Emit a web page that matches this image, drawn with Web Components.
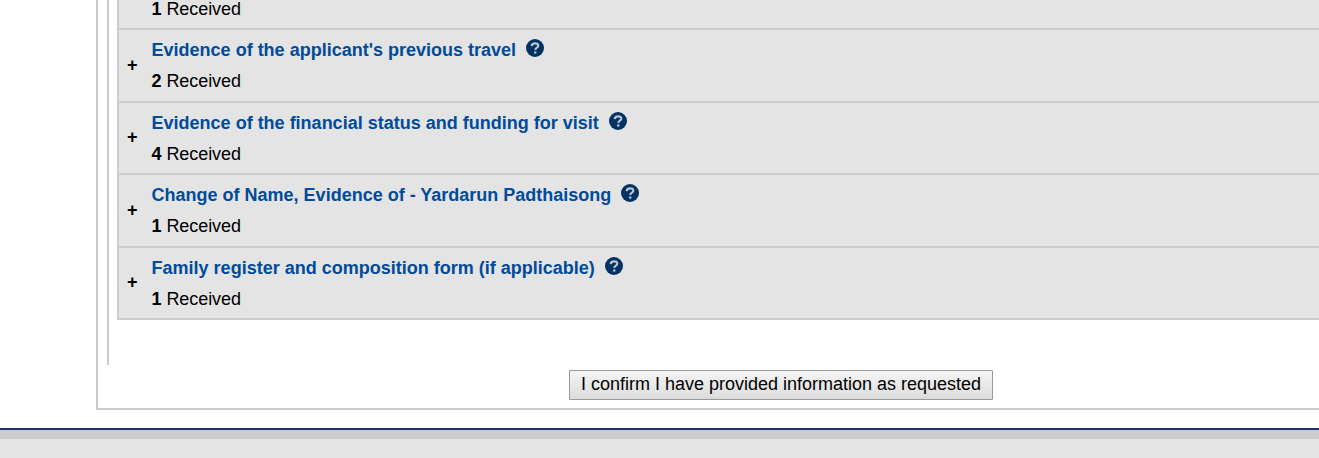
<!DOCTYPE html>
<html lang="en">
<head>
<meta charset="utf-8">
<title>Documents</title>
<style>
  body {
    margin: 0;
    height: 458px;
    overflow: hidden;
    background: #fff;
    color: #000;
    font: 18px/20px "Liberation Sans", Arial, sans-serif;
  }
</style>
</head>
<body>
<form-panel>
  <document-list>
    <document-row cut count="1"></document-row>
    <document-row count="2">Evidence of the applicant's previous travel</document-row>
    <document-row count="4">Evidence of the financial status and funding for visit</document-row>
    <document-row count="1">Change of Name, Evidence of - Yardarun Padthaisong</document-row>
    <document-row count="1">Family register and composition form (if applicable)</document-row>
  </document-list>
  <confirm-button slot="actions">I confirm I have provided information as requested</confirm-button>
</form-panel>
<page-footer></page-footer>

<script>
'use strict'

class FormPanel extends HTMLElement {
  constructor() {
    super()
    const shadow = this.attachShadow({ mode: 'open' })
    shadow.innerHTML = `
      <style>
        :host {
          display: block;
          box-sizing: border-box;
          height: 410px;
          margin-left: 96px;
          padding-left: 9px;
          border: solid #ccc;
          border-width: 0 0 2px 2px;
        }
        .section {
          box-sizing: border-box;
          height: 365px;
          padding-left: 8px;
          border-left: 2px solid #ccc;
        }
        .actions {
          padding: 5px 0 0 462px;
        }
      </style>
      <div class="section"><slot></slot></div>
      <div class="actions"><slot name="actions"></slot></div>
    `
  }
}

class DocumentList extends HTMLElement {
  constructor() {
    super()
    const shadow = this.attachShadow({ mode: 'open' })
    shadow.innerHTML = `
      <style>
        :host {
          display: block;
          border-left: 2px solid #ccc;
          background: #e4e4e4;
        }
      </style>
      <slot></slot>
    `
  }
}

class HelpIcon extends HTMLElement {
  constructor() {
    super()
    const shadow = this.attachShadow({ mode: 'open' })
    shadow.innerHTML = `
      <style>
        :host {
          display: block;
          width: 18px;
          height: 18px;
        }
        svg {
          display: block;
        }
      </style>
      <svg width="18" height="18" viewBox="0 0 18 18" fill="none">
        <circle cx="9" cy="9" r="9" fill="#003264"/>
        <path d="M5.7 7.1C5.8 5.2 7.2 4.4 9 4.4c2 0 3.3.9 3.3 2.4 0 2-3 1.9-3 4.2" stroke="#b8c4d1" stroke-width="2.1"/>
        <rect x="8.1" y="12.4" width="2.3" height="2.2" fill="#b8c4d1"/>
      </svg>
    `
  }
}

class DocumentRow extends HTMLElement {
  constructor() {
    super()
    // "cut" is the row scrolled past the top edge, only its status line is left
    const shadow = this.attachShadow({ mode: 'open' })
    shadow.innerHTML = `
      <style>
        :host {
          display: flex;
          box-sizing: border-box;
          height: 72.5px;
          border-bottom: 2px solid #ccc;
        }
        :host([cut]) {
          height: 30px;
        }
        :host([cut]) .toggle, :host([cut]) .title {
          display: none;
        }
        :host([cut]) .body {
          padding: 0 0 0 32.6px;
          margin-top: -1px;
        }
        .toggle {
          width: 32.6px;
          padding: 24.8px 0 0 8px;
          box-sizing: border-box;
          font-weight: bold;
        }
        .body {
          padding-top: 10px;
        }
        .title {
          display: flex;
          gap: 10px;
          height: 31px;
          color: #004b9b;
          font-weight: bold;
          white-space: nowrap;
        }
        .status {
          letter-spacing: -0.08px;
        }
        help-icon {
          margin-top: -1px;
        }
      </style>
      <div class="toggle">+</div>
      <div class="body">
        <div class="title"><span><slot></slot></span><help-icon></help-icon></div>
        <div class="status"><b class="count"></b> Received</div>
      </div>
    `
    this._count = shadow.querySelector('.count')
  }

  connectedCallback() {
    this._count.textContent = this.getAttribute('count') || '0'
  }
}

class ConfirmButton extends HTMLElement {
  constructor() {
    super()
    const shadow = this.attachShadow({ mode: 'open' })
    shadow.innerHTML = `
      <style>
        :host {
          display: block;
        }
        button {
          display: block;
          box-sizing: border-box;
          width: 424px;
          height: 30px;
          padding: 0 0 2px;
          border: 1px solid #999;
          border-radius: 1px;
          background: linear-gradient(#f5f5f5, #dcdcdc);
          color: #000;
          font: inherit;
          white-space: nowrap;
        }
      </style>
      <button type="button"><slot></slot></button>
    `
  }
}

class PageFooter extends HTMLElement {
  constructor() {
    super()
    const shadow = this.attachShadow({ mode: 'open' })
    shadow.innerHTML = `
      <style>
        :host {
          display: block;
          height: 28px;
          margin-top: 18px;
          border-top: 2px solid #1b3564;
          background: #e4e4e4;
        }
        .band {
          height: 9px;
          background: #ccc;
        }
      </style>
      <div class="band"></div>
    `
  }
}

customElements.define('form-panel', FormPanel)
customElements.define('document-list', DocumentList)
customElements.define('help-icon', HelpIcon)
customElements.define('document-row', DocumentRow)
customElements.define('confirm-button', ConfirmButton)
customElements.define('page-footer', PageFooter)
</script>
</body>
</html>
